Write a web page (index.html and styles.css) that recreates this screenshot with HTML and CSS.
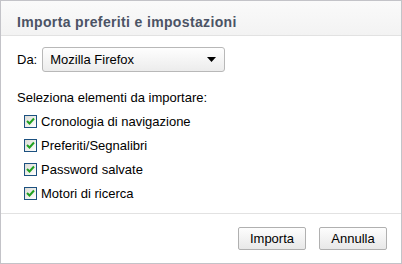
FILE: index.html
```html
<!DOCTYPE html>
<html>
<head>
<meta charset="utf-8">
<link rel="stylesheet" href="styles.css">
</head>
<body>
<div class="dialog">
  <div class="header">Importa preferiti e impostazioni</div>
  <div class="content">
    <div class="from-row">
      <span class="from-label">Da:</span>
      <div class="select">
        <span>Mozilla Firefox</span>
        <svg class="arrow" width="9" height="5" viewBox="0 0 9 5"><path d="M0 0H9L4.5 5Z" fill="#000"/></svg>
      </div>
    </div>
    <div class="section-label">Seleziona elementi da importare:</div>
    <ul class="checks">
      <li><span class="cb"><svg width="9" height="8" viewBox="0 0 9 8"><path d="M1 4L3.5 6.5L8 1.5" fill="none" stroke="#21a121" stroke-width="2"/></svg></span>Cronologia di navigazione</li>
      <li><span class="cb"><svg width="9" height="8" viewBox="0 0 9 8"><path d="M1 4L3.5 6.5L8 1.5" fill="none" stroke="#21a121" stroke-width="2"/></svg></span>Preferiti/Segnalibri</li>
      <li><span class="cb"><svg width="9" height="8" viewBox="0 0 9 8"><path d="M1 4L3.5 6.5L8 1.5" fill="none" stroke="#21a121" stroke-width="2"/></svg></span>Password salvate</li>
      <li><span class="cb"><svg width="9" height="8" viewBox="0 0 9 8"><path d="M1 4L3.5 6.5L8 1.5" fill="none" stroke="#21a121" stroke-width="2"/></svg></span>Motori di ricerca</li>
    </ul>
  </div>
  <div class="footer">
    <button class="btn">Importa</button>
    <button class="btn">Annulla</button>
  </div>
</div>
</body>
</html>
```
FILE: styles.css
```css
html, body { margin: 0; padding: 0; background: #fff; }
body { font-family: "Liberation Sans", Arial, sans-serif; font-size: 13px; color: #000; }
.dialog {
  width: 402px; height: 264px; box-sizing: border-box;
  border: 1px solid #c3c3c8;
  display: flex; flex-direction: column;
}
.header {
  height: 35px; box-sizing: border-box;
  background: linear-gradient(#fafafa, #f3f3f3);
  border-bottom: 1px solid #e2e2e2;
  padding: 13px 0 0 16px;
  font-size: 14px; font-weight: bold; color: #4b5365;
  letter-spacing: 0.35px;
  line-height: 17px;
}
.content { flex: 1; padding: 11px 16px 0 16px; }
.from-row { display: flex; align-items: center; gap: 5px; }
.select {
  width: 183px; height: 25px; box-sizing: border-box;
  border: 1px solid #b8b8b8; border-radius: 3px;
  background: linear-gradient(#fefefe, #ececec);
  display: flex; align-items: center; justify-content: space-between;
  padding: 0 8px 0 7px;
}
.section-label { margin-top: 18px; line-height: 16px; }
.checks { list-style: none; margin: 0; padding: 0 0 0 7px; }
.checks li { display: flex; align-items: center; height: 24px; }
.checks li:first-child { margin-top: 3px; }
.cb {
  width: 11px; height: 11px; border: 1px solid #1c5180;
  background: linear-gradient(135deg, #dcdcd6, #fff);
  display: flex; align-items: center; justify-content: center;
  margin-right: 4px;
}
.footer {
  height: 50px; box-sizing: border-box;
  border-top: 1px solid #e2e2e2;
  display: flex; justify-content: flex-end; align-items: center; gap: 13px;
  padding: 0 14px 0 0;
}
.btn {
  font-family: inherit; font-size: 13px; color: #000;
  width: 68px; height: 23px;
  border: 1px solid #b0b0b0; border-radius: 2px;
  background: linear-gradient(#fdfdfd, #e8e8e8);
  padding: 0;
}
```
